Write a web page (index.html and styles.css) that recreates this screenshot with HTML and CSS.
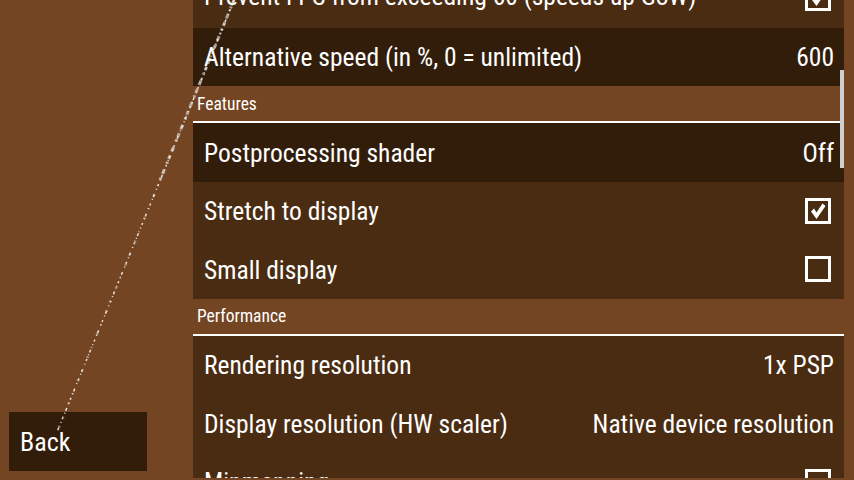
FILE: index.html
```html
<!DOCTYPE html>
<html>
<head>
<meta charset="utf-8">
<title>Graphics settings</title>
<link rel="stylesheet" href="styles.css">
</head>
<body>
<div class="screen">
  <aside class="side">
    <div class="back-btn">Back</div>
  </aside>
  <main class="panel">
    <div class="list">
      <div class="row top">
        <span class="label">Prevent FPS from exceeding 60 (speeds up GoW)</span>
        <svg class="check" viewBox="0 0 26 26"><rect x="1.5" y="1.5" width="23" height="23"/><polygon points="6,13.5 9,10.5 11.5,14.5 17.5,5.5 20.5,8 11.5,21"/></svg>
      </div>
      <div class="row focused">
        <span class="label">Alternative speed (in %, 0 = unlimited)</span>
        <span class="value">600</span>
      </div>
      <div class="header">Features</div>
      <div class="row focused">
        <span class="label">Postprocessing shader</span>
        <span class="value">Off</span>
      </div>
      <div class="row">
        <span class="label">Stretch to display</span>
        <svg class="check" viewBox="0 0 26 26"><rect x="1.5" y="1.5" width="23" height="23"/><polygon points="6,13.5 9,10.5 11.5,14.5 17.5,5.5 20.5,8 11.5,21"/></svg>
      </div>
      <div class="row">
        <span class="label">Small display</span>
        <svg class="check" viewBox="0 0 26 26"><rect x="1.5" y="1.5" width="23" height="23"/></svg>
      </div>
      <div class="header">Performance</div>
      <div class="row">
        <span class="label">Rendering resolution</span>
        <span class="value">1x PSP</span>
      </div>
      <div class="row">
        <span class="label">Display resolution (HW scaler)</span>
        <span class="value">Native device resolution</span>
      </div>
      <div class="row">
        <span class="label">Mipmapping</span>
        <svg class="check" viewBox="0 0 26 26"><rect x="1.5" y="1.5" width="23" height="23"/></svg>
      </div>
    </div>
    <div class="scrollbar"></div>
  </main>
  <svg class="streak" viewBox="0 0 854 480">
    <line x1="234" y1="0" x2="57" y2="432" class="s1"/>
    <line x1="234" y1="0" x2="57" y2="432" class="s2"/>
    <line x1="234" y1="0" x2="160" y2="180" class="s3"/>
  </svg>
</div>
</body>
</html>
```
FILE: styles.css
```css
html, body {
  margin: 0;
  padding: 0;
}
body {
  background: #734522;
  color: #fff;
  font-family: "Roboto Condensed", "Roboto", sans-serif;
  overflow: hidden;
}
.screen {
  position: relative;
  display: flex;
  width: 854px;
  height: 480px;
  overflow: hidden;
}
.side {
  width: 193px;
  flex: none;
  display: flex;
  flex-direction: column;
  justify-content: flex-end;
  padding: 0 0 9px 9px;
  box-sizing: border-box;
}
.back-btn {
  width: 138px;
  height: 59px;
  background: #321d0b;
  box-sizing: border-box;
  padding-left: 11px;
  display: flex;
  align-items: center;
  font-size: 26px;
}
.panel {
  position: relative;
  width: 651px;
  height: 478px;
  flex: none;
  overflow: hidden;
}
.list {
  margin-top: -31px;
  display: flex;
  flex-direction: column;
}
.row {
  height: 58.5px;
  flex: none;
  background: #4a2c12;
  display: flex;
  align-items: center;
  justify-content: space-between;
  padding: 0 10px 0 11px;
  box-sizing: border-box;
  font-size: 25.5px;
  white-space: nowrap;
}
.row.focused {
  background: #321d0b;
}
.label,
.value {
  padding-top: 1px;
}
.row.top .label {
  padding-top: 0;
  padding-bottom: 4px;
}
.check {
  width: 26px;
  height: 26px;
  margin-right: 3px;
  flex: none;
}
.check rect {
  fill: none;
  stroke: #fff;
  stroke-width: 3;
}
.check polygon {
  fill: #fff;
}
.header {
  height: 37px;
  flex: none;
  box-sizing: border-box;
  border-bottom: 2px solid #fff;
  padding-left: 4px;
  display: flex;
  align-items: center;
  font-size: 17.5px;
}
.scrollbar {
  position: absolute;
  right: 0;
  top: 70px;
  width: 4px;
  height: 98px;
  background: #cfcfcf;
}
.streak {
  position: absolute;
  left: 0;
  top: 0;
  width: 854px;
  height: 480px;
  pointer-events: none;
}
.streak .s1 {
  stroke: #fff;
  stroke-width: 1.5;
  stroke-dasharray: 3 2 1 4 2 3 1 5;
  opacity: 0.85;
}
.streak .s2 {
  stroke: #ddd;
  stroke-width: 2.5;
  stroke-dasharray: 1 9 2 13;
  opacity: 0.5;
}
.streak .s3 {
  stroke: #eee;
  stroke-width: 3;
  stroke-dasharray: 4 3 2 6 5 4;
  opacity: 0.6;
}
```
